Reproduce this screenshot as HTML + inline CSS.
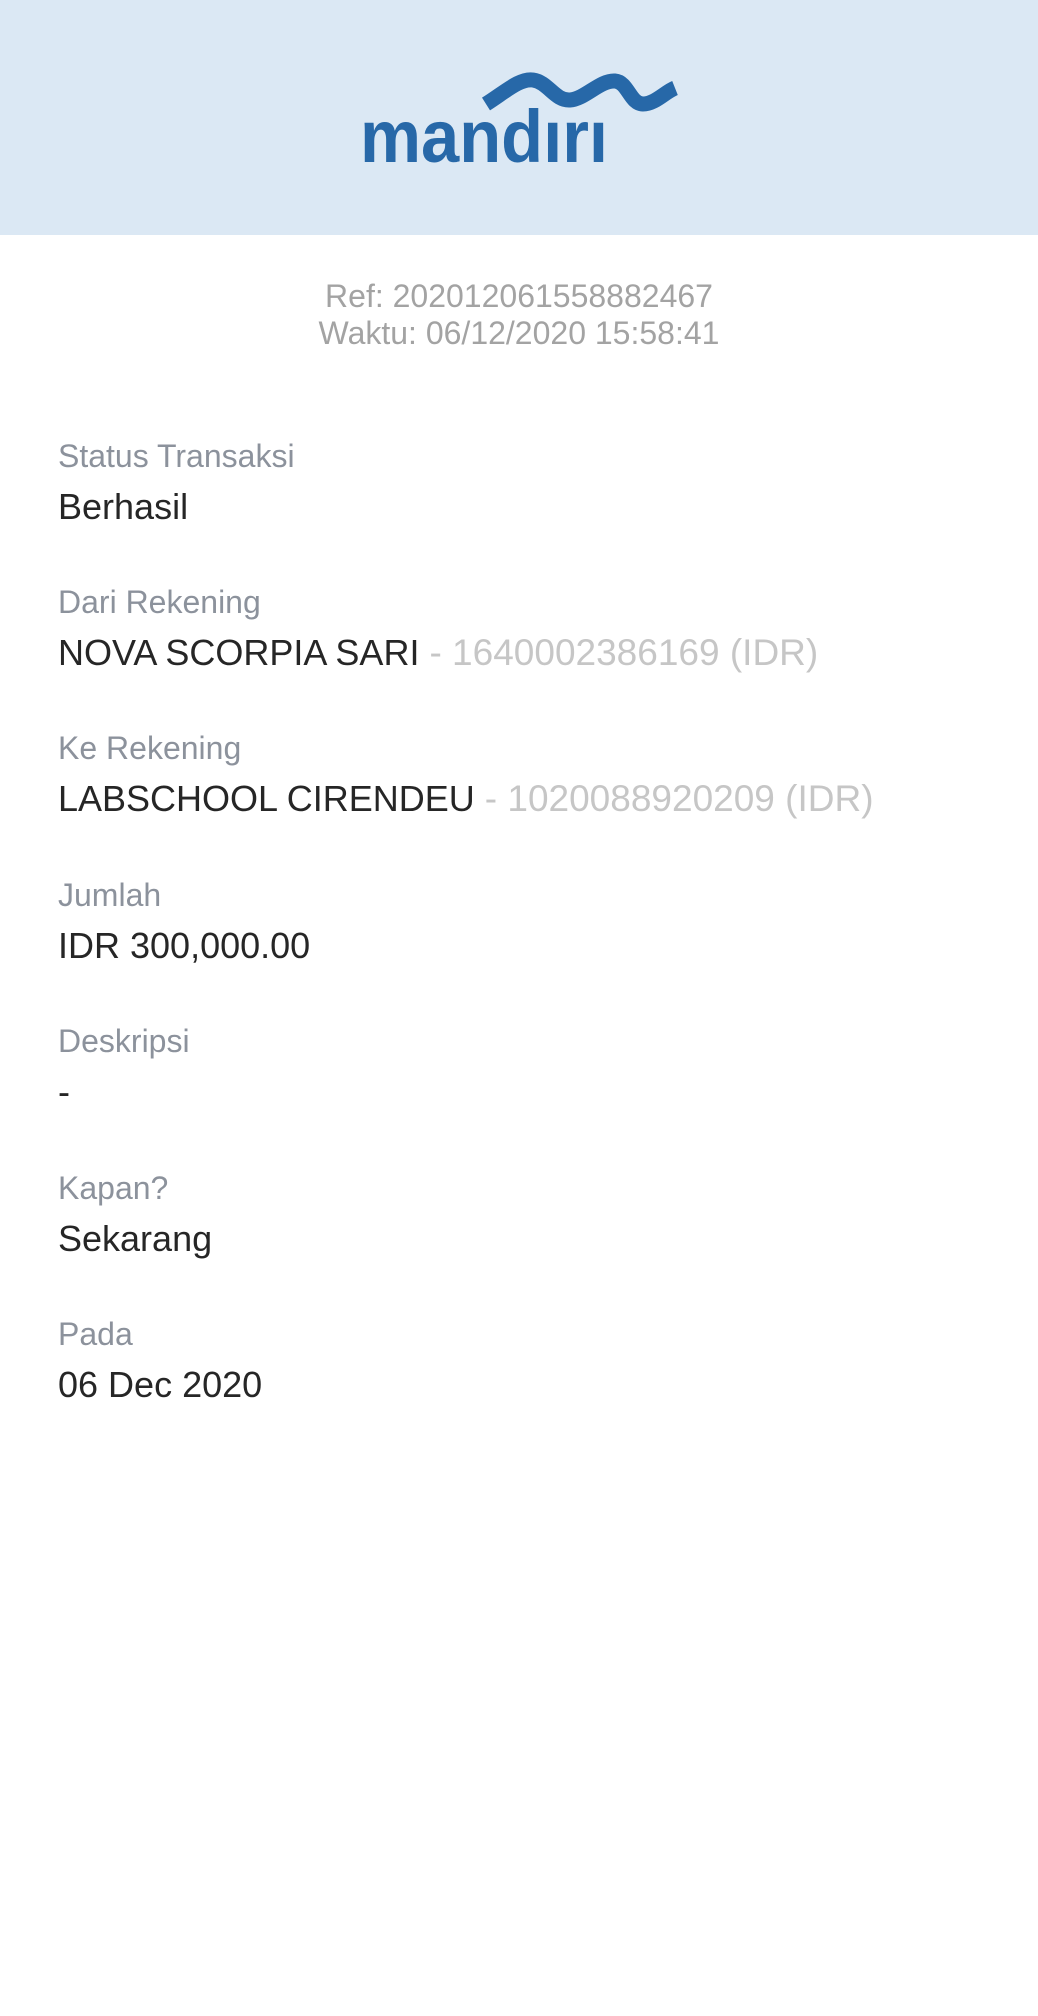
<!DOCTYPE html>
<html><head><meta charset="utf-8"><style>
body{margin:0;width:1038px;height:2016px;background:#fff;font-family:"Liberation Sans",sans-serif;position:relative;overflow:hidden}
.hdr{position:absolute;left:0;top:0;width:1038px;height:235px;background:#dbe8f4}
.ref{position:absolute;left:0;width:1038px;text-align:center;color:#a3a3a3;font-size:32px;line-height:36px}
.g{position:absolute;left:58px}
.l{color:#8c929c;font-size:32px;line-height:36px}
.v{color:#262626;font-size:36px;line-height:42px;margin-top:12px;white-space:nowrap}
.v span{color:#c6c6c6;font-size:37px}
</style></head><body>
<div class="hdr">
<svg width="1038" height="235" style="position:absolute;left:0;top:0">
<path d="M486 104 C505 92,520 78,533 80 C548 82,555 101,570 100 C585 99,600 80,615 81 C628 82,630 104,643 104 C655 104,665 92,675 88" fill="none" stroke="#2768a8" stroke-width="15" stroke-linejoin="round"/>
<text x="360" y="162" font-family="Liberation Sans" font-weight="bold" font-size="74" fill="#2768a8" textLength="248" lengthAdjust="spacingAndGlyphs">mandırı</text>
</svg>
</div>
<div class="ref" style="top:278px">Ref: 202012061558882467</div>
<div class="ref" style="top:315px">Waktu: 06/12/2020 15:58:41</div>
<div class="g" style="top:438px"><div class="l">Status Transaksi</div><div class="v">Berhasil</div></div>
<div class="g" style="top:584px"><div class="l">Dari Rekening</div><div class="v">NOVA SCORPIA SARI <span>- 1640002386169 (IDR)</span></div></div>
<div class="g" style="top:730px"><div class="l">Ke Rekening</div><div class="v">LABSCHOOL CIRENDEU <span>- 1020088920209 (IDR)</span></div></div>
<div class="g" style="top:877px"><div class="l">Jumlah</div><div class="v">IDR 300,000.00</div></div>
<div class="g" style="top:1023px"><div class="l">Deskripsi</div><div class="v">-</div></div>
<div class="g" style="top:1170px"><div class="l">Kapan?</div><div class="v">Sekarang</div></div>
<div class="g" style="top:1316px"><div class="l">Pada</div><div class="v">06 Dec 2020</div></div>
</body></html>
